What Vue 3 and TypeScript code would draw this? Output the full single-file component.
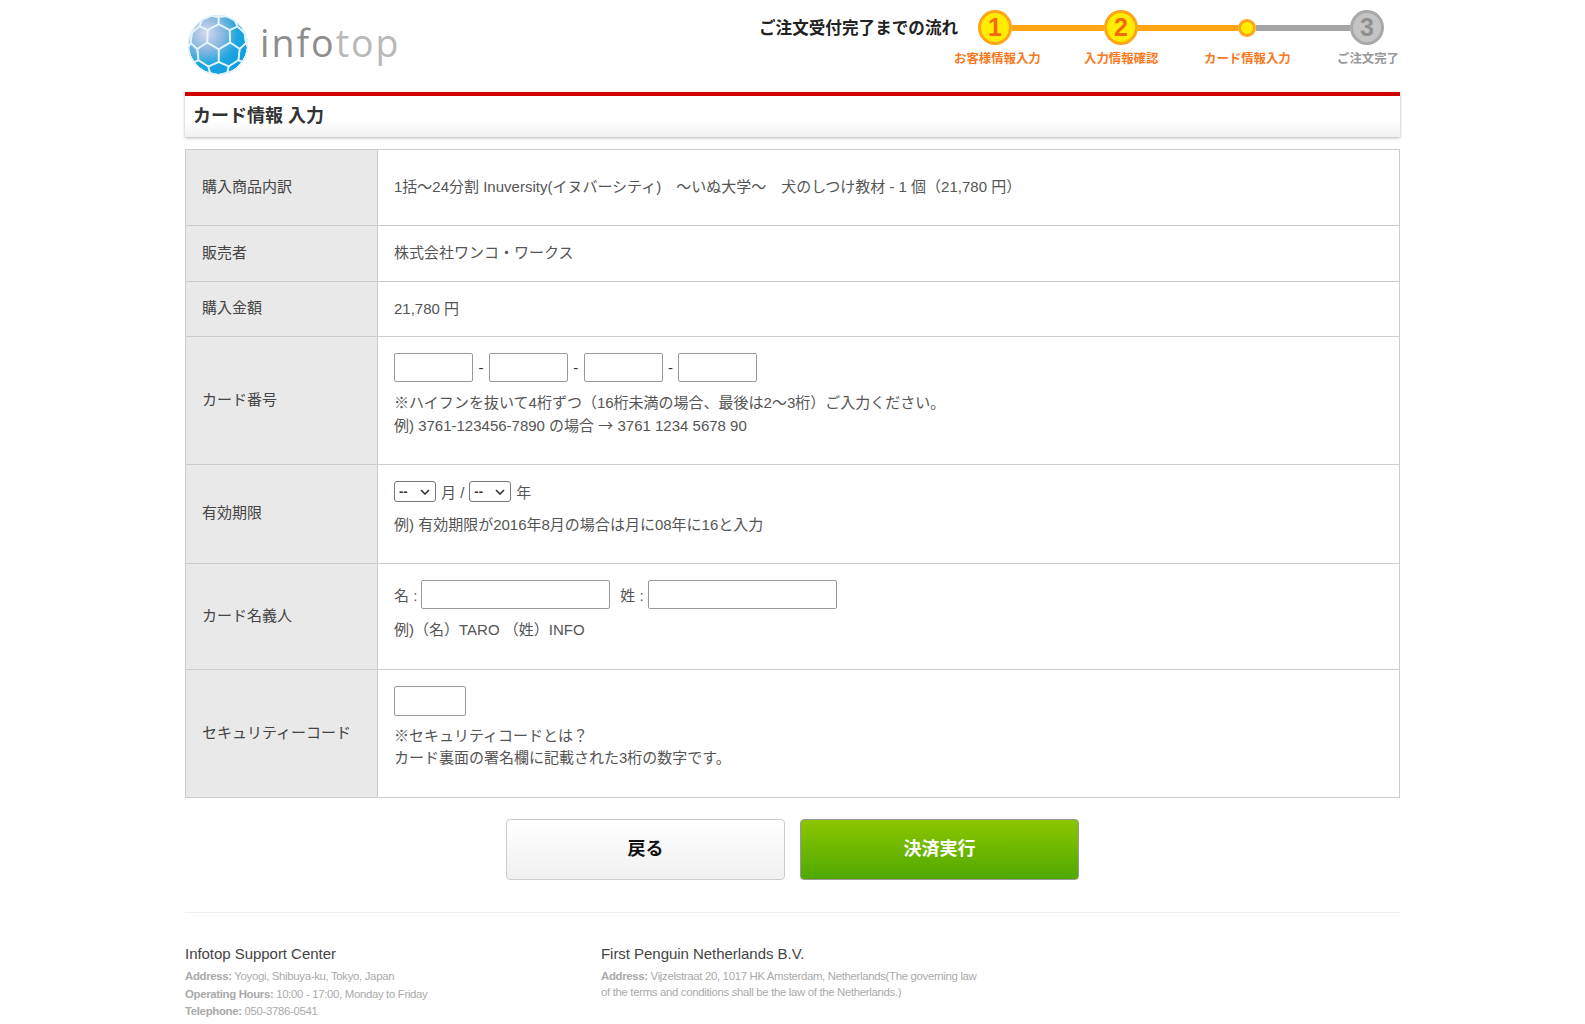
<script setup lang="ts">
const hexes: string[] = []
const r = 11
const w = r * Math.sqrt(3)
const warp = (x: number, y: number): string => {
  const dx = x - 30
  const dy = y - 30
  const d = Math.hypot(dx, dy) / 38
  const k = d === 0 ? 1 : (Math.sin(Math.min(d, 1) * Math.PI / 2) / d) * (30 / 38)
  return `${(30 + dx * k).toFixed(1)},${(30 + dy * k).toFixed(1)}`
}
for (let row = -2; row < 8; row++) {
  for (let col = -2; col < 8; col++) {
    const cx = col * w + (row % 2 ? w / 2 : 0) + 2
    const cy = row * r * 1.5 + 6
    const pts: string[] = []
    for (let i = 0; i < 6; i++) {
      const a = Math.PI / 6 + (i * Math.PI) / 3
      pts.push(warp(cx + r * Math.cos(a), cy + r * Math.sin(a)))
    }
    hexes.push(pts.join(' '))
  }
}
</script>

<template>
  <div class="page">
    <header class="top">
      <div class="logo">
        <svg class="globe" width="60" height="60" viewBox="0 0 60 60">
          <defs>
            <radialGradient id="ball" cx="0.3" cy="0.3" r="0.75">
              <stop offset="0" stop-color="#d6d8ec" />
              <stop offset="0.4" stop-color="#86b6e0" />
              <stop offset="0.7" stop-color="#1ca6e2" />
              <stop offset="1" stop-color="#0f9fdd" />
            </radialGradient>
            <clipPath id="round"><circle cx="30" cy="30" r="30" /></clipPath>
          </defs>
          <circle cx="30" cy="30" r="30" fill="url(#ball)" />
          <g clip-path="url(#round)" fill="none" stroke="#e4f4fb" stroke-width="1.7" stroke-opacity="0.9">
            <polygon v-for="(p, i) in hexes" :key="i" :points="p" />
          </g>
        </svg>
        <span class="word"><span class="w1">info</span><span class="w2">top</span></span>
      </div>
      <div class="flow">
        <div class="flow-title">ご注文受付完了までの流れ</div>
        <div class="stepper">
          <div class="track">
            <span class="dot big on">1</span>
            <span class="line l1"></span>
            <span class="dot big on">2</span>
            <span class="line l2"></span>
            <span class="dot small"></span>
            <span class="line l3 off"></span>
            <span class="dot big off">3</span>
          </div>
          <div class="labels">
            <span class="lab">お客様情報入力</span>
            <span class="lab">入力情報確認</span>
            <span class="lab">カード情報入力</span>
            <span class="lab grey">ご注文完了</span>
          </div>
        </div>
      </div>
    </header>

    <h1 class="title">カード情報 入力</h1>

    <table class="form">
      <tbody>
        <tr class="r1">
          <th>購入商品内訳</th>
          <td>1括〜24分割 Inuversity(イヌバーシティ)　〜いぬ大学〜　犬のしつけ教材 - 1 個（21,780 円）</td>
        </tr>
        <tr class="r2">
          <th>販売者</th>
          <td>株式会社ワンコ・ワークス</td>
        </tr>
        <tr class="r3">
          <th>購入金額</th>
          <td>21,780 円</td>
        </tr>
        <tr class="r4">
          <th>カード番号</th>
          <td class="top-cell">
            <div class="inputs">
              <input class="num" type="text" /><span>-</span>
              <input class="num" type="text" /><span>-</span>
              <input class="num" type="text" /><span>-</span>
              <input class="num" type="text" />
            </div>
            <p class="note first">※ハイフンを抜いて4桁ずつ（16桁未満の場合、最後は2〜3桁）ご入力ください。</p>
            <p class="note">例) 3761-123456-7890 の場合 <span class="arrow">→</span> 3761 1234 5678 90</p>
          </td>
        </tr>
        <tr class="r5">
          <th>有効期限</th>
          <td class="top-cell">
            <div class="dates">
              <select><option>--</option></select><span>月 /</span>
              <select><option>--</option></select><span>年</span>
            </div>
            <p class="note date-note">例) 有効期限が2016年8月の場合は月に08年に16と入力</p>
          </td>
        </tr>
        <tr class="r6">
          <th>カード名義人</th>
          <td class="top-cell">
            <div class="names">
              <span>名 :</span><input class="name" type="text" />
              <span class="sei">姓 :</span><input class="name" type="text" />
            </div>
            <p class="note name-note">例)（名）TARO （姓）INFO</p>
          </td>
        </tr>
        <tr class="r7">
          <th>セキュリティーコード</th>
          <td class="top-cell">
            <input class="sec" type="text" />
            <p class="note sec-note">※セキュリティコードとは？</p>
            <p class="note up">カード裏面の署名欄に記載された3桁の数字です。</p>
          </td>
        </tr>
      </tbody>
    </table>

    <div class="actions">
      <button class="btn back" type="button">戻る</button>
      <button class="btn go" type="button">決済実行</button>
    </div>

    <footer class="foot">
      <div class="col c1">
        <h2>Infotop Support Center</h2>
        <p><b>Address:</b> Yoyogi, Shibuya-ku, Tokyo, Japan</p>
        <p><b>Operating Hours:</b> 10:00 - 17:00, Monday to Friday</p>
        <p><b>Telephone:</b> 050-3786-0541</p>
      </div>
      <div class="col c2">
        <h2>First Penguin Netherlands B.V.</h2>
        <p class="tight"><b>Address:</b> Vijzelstraat 20, 1017 HK Amsterdam, Netherlands(The governing law of the terms and conditions shall be the law of the Netherlands.)</p>
      </div>
    </footer>
  </div>
</template>

<style>
html, body { margin: 0; background: #fff; }
</style>

<style scoped>
.page {
  width: 1219px;
  margin: 0 auto;
  padding: 0 2px;
  box-sizing: border-box;
  font-family: "Liberation Sans", "Noto Sans CJK JP", sans-serif;
  font-size: 15px;
  color: #555;
  overflow: hidden;
}
.top { height: 92px; display: flex; justify-content: space-between; }
.logo { display: flex; align-items: flex-start; padding: 15px 0 0 3px; }
.globe { display: block; }
.word {
  margin: 3px 0 0 12px;
  font-family: "Open Sans", sans-serif;
  font-size: 37.5px;
  line-height: 50px;
  letter-spacing: 2px;
}
.w1 { color: #8d8d8d; }
.w2 { color: #b9b9b9; }
.flow { display: flex; align-items: flex-start; }
.flow-title {
  margin: 18px -1px 0 0;
  width: 197px;
  font-size: 16.6px;
  line-height: 22px;
  font-weight: 700;
  color: #222;
  white-space: nowrap;
}
.stepper { width: 445px; padding-top: 10px; }
.track { display: flex; align-items: center; padding-left: 23px; height: 35px; }
.dot {
  flex: none;
  box-sizing: border-box;
  border-radius: 50%;
  display: flex;
  align-items: center;
  justify-content: center;
}
.big {
  width: 34px;
  height: 35px;
  font-size: 25px;
  font-weight: 700;
  line-height: 1;
}
.on { background: #ffec00; border: 3px solid #ffa515; color: #f26a10; }
.off { background: #c4c4c4; border: 3px solid #a8a8a8; color: #8f8f8f; }
.small { width: 18px; height: 18px; background: #ffec00; border: 3px solid #ffa515; }
.line { flex: none; height: 6px; background: #ffa515; }
.l1 { width: 92px; }
.l2 { width: 100px; }
.l3.off { width: 94px; background: #a4a4a4; border: 0; }
.labels { display: flex; margin: 5px 0 0 -1px; font-size: 12.4px; font-weight: 700; line-height: 18px; color: #f57a22; white-space: nowrap; }
.lab:nth-child(1) { width: 130px; }
.lab:nth-child(2) { width: 120px; }
.lab:nth-child(3) { width: 133px; }
.lab.grey { color: #999; }
.title {
  margin: 0;
  box-sizing: border-box;
  height: 45px;
  padding: 8px 8px 0;
  border-top: 4px solid #d00000;
  background: linear-gradient(#fff 60%, #f1f1f1);
  box-shadow: 0 1px 3px rgba(0, 0, 0, 0.3);
  font-size: 18px;
  line-height: 24px;
  font-weight: 700;
  color: #333;
}
.form {
  width: 100%;
  margin-top: 12px;
  border-collapse: collapse;
  table-layout: fixed;
  border: 1px solid #ccc;
}
.form th, .form td { border: 1px solid #ccc; vertical-align: middle; padding: 0 16px 4px; }
.form th {
  width: 159px;
  padding-bottom: 5px;
  background: #e9e9e9;
  color: #444;
  text-align: left;
  font-weight: 400;
  white-space: nowrap;
}
.form td.top-cell { vertical-align: top; padding-top: 16px; }
.r1 { height: 76px; }
.r2 { height: 56px; }
.r3 { height: 55px; }
.r4 { height: 128px; }
.r5 { height: 99px; }
.r6 { height: 106px; }
.r7 { height: 128px; }
.note { margin: 0; line-height: 23px; }
.note.up { margin-top: -1px; }
.arrow { font-family: "Noto Sans CJK JP", sans-serif; line-height: 1; }
.first { margin-top: 9px; }
input, select {
  box-sizing: border-box;
  margin: 0;
  background-color: #fff;
  border: 1px solid #999;
  border-radius: 2px;
  font: inherit;
}
.inputs { display: flex; align-items: center; gap: 5.4px; color: #333; }
.num { width: 79px; height: 29px; }
.dates { display: flex; align-items: center; gap: 5px; }
select {
  width: 42px;
  height: 21px;
  padding: 0 0 0 4px;
  appearance: none;
  font-size: 13px;
  font-weight: 700;
  color: #333;
  border-color: #777;
  border-radius: 3px;
  background-image: url("data:image/svg+xml,%3Csvg xmlns='http://www.w3.org/2000/svg' width='10' height='6'%3E%3Cpath d='M1 1l4 4 4-4' fill='none' stroke='%23333' stroke-width='1.6'/%3E%3C/svg%3E");
  background-repeat: no-repeat;
  background-position: right 5px center;
}
.date-note { margin-top: 11px; }
.names { display: flex; align-items: center; gap: 4px; }
.name { width: 189px; height: 29px; }
.sei { margin-left: 6px; }
.name-note { margin-top: 9px; }
.sec { display: block; width: 72px; height: 30px; }
.sec-note { margin-top: 8px; }
.actions { display: flex; justify-content: center; gap: 15px; margin-top: 21px; }
.btn {
  box-sizing: border-box;
  width: 279px;
  height: 61px;
  padding: 0 0 6px;
  border-radius: 4px;
  font-family: inherit;
  font-size: 18px;
  font-weight: 700;
}
.back { background: linear-gradient(#fff, #f0f0f0); border: 1px solid #ccc; color: #111; }
.go { background: linear-gradient(#8cc500, #4fa900); border: 1px solid #999; color: #fff; }
.foot {
  display: flex;
  margin-top: 32px;
  padding-top: 30px;
  border-top: 1px solid #eee;
}
.c1 { width: 416px; }
.c2 { width: 380px; }
.col h2 { margin: 0 0 3px; font-size: 15px; line-height: 22px; font-weight: 400; color: #444; letter-spacing: -0.04px; }
.col p { margin: 0; font-size: 11.4px; line-height: 17.5px; color: #aaa; letter-spacing: -0.33px; }
.col p.tight { line-height: 16px; }
</style>
